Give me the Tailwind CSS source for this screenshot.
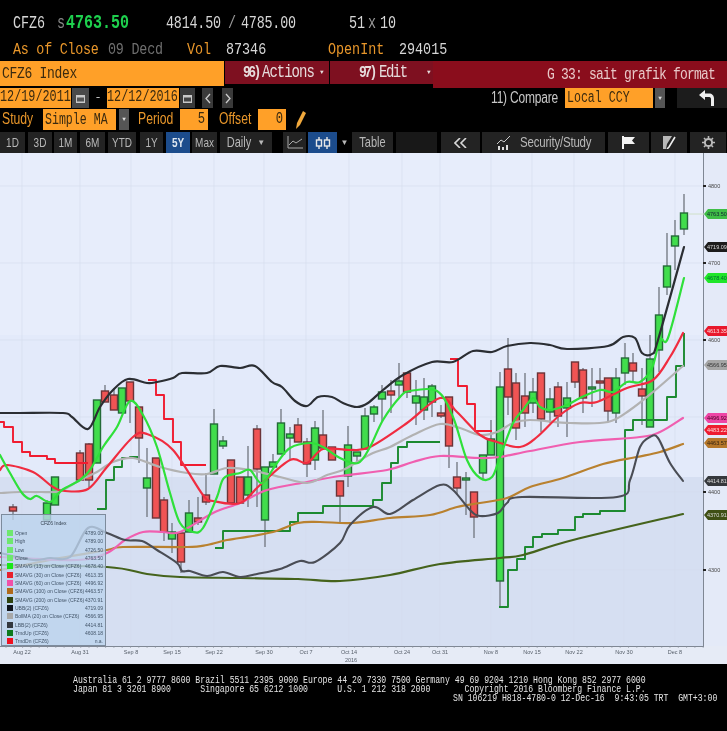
<!DOCTYPE html>
<html lang="en">
<head>
    <meta charset="UTF-8">
    <meta name="viewport" content="width=device-width, initial-scale=1.0">
    <title>CFZ6 Index</title>
    <script src="https://cdn.jsdelivr.net/npm/@tailwindcss/browser@4"></script>
</head>
<body class="bg-black">
<div class="w-[727px] h-[731px] overflow-hidden bg-black font-['Liberation_Mono',monospace] blur-[0.5px] flex flex-col">

    <!-- Quote lines -->
    <div class="h-[41px] shrink-0 pt-[15px] pl-[13px] flex items-start text-[13.4px] leading-[18px] text-[#d6d6d6]">
        <span class="scale-y-[1.35] w-[44px]">CFZ6</span>
        <span class="scale-y-[1.35] w-[9px] text-[#8a8a8a]">s</span>
        <span class="scale-y-[1.35] w-[100px] text-[15px] font-bold text-[#1ed04e]">4763.50</span>
        <span class="scale-y-[1.35] w-[62px] tracking-[-0.2px]">4814.50</span>
        <span class="scale-y-[1.35] w-[13px] text-[#999]">/</span>
        <span class="scale-y-[1.35] w-[108px] tracking-[-0.2px]">4785.00</span>
        <span class="scale-y-[1.35] w-[19px]">51</span>
        <span class="scale-y-[1.35] w-[12px] text-[#999]">x</span>
        <span class="scale-y-[1.35]">10</span>
    </div>
    <div class="h-[20px] shrink-0 pt-[1px] pl-[13px] flex items-start text-[13.4px] leading-[16px] text-[#e8962a]">
        <span class="scale-y-[1.25] w-[95px] tracking-[-0.25px]">As of Close</span>
        <span class="scale-y-[1.25] w-[79px] tracking-[-0.2px] text-[#6f6f6f]">09 Decd</span>
        <span class="scale-y-[1.25] w-[39px]">Vol</span>
        <span class="scale-y-[1.25] w-[102px] text-[#d6d6d6]">87346</span>
        <span class="scale-y-[1.25] w-[71px]">OpenInt</span>
        <span class="scale-y-[1.25] text-[#d6d6d6]">294015</span>
    </div>

    <!-- Command bar -->
    <div class="h-[27px] shrink-0 flex text-[13px]">
        <div class="w-[224px] h-[25px] bg-[#ffa028] text-[#3a2a10] pl-[2px] flex items-center">
            <span class="scale-y-[1.3] tracking-[-0.3px]">CFZ6 Index</span>
        </div>
        <div class="w-[104px] h-[23px] ml-[1px] bg-[#7e1020] text-[#e6dcdc] flex items-center pl-[18px]">
            <span class="scale-y-[1.3] w-[19px] tracking-[-2.5px] font-bold">96)</span>
            <span class="scale-y-[1.3] text-[14px] tracking-[-1px] w-[58px]">Actions</span>
            <span class="text-[6px]">▼</span>
        </div>
        <div class="w-[103px] h-[23px] ml-[1px] bg-[#7e1020] text-[#e6dcdc] flex items-center pl-[29px]">
            <span class="scale-y-[1.3] w-[20px] tracking-[-2.5px] font-bold">97)</span>
            <span class="scale-y-[1.3] text-[14px] tracking-[-1.5px] w-[48px]">Edit</span>
            <span class="text-[6px]">▼</span>
        </div>
        <div class="w-[294px] bg-[#8a0d1c] text-[#e8c8c8] flex items-center justify-end pr-[12px]">
            <span class="scale-y-[1.3] tracking-[-0.8px]">G 33: sait grafik format</span>
        </div>
    </div>

    <!-- Date range and compare -->
    <div class="h-[21px] shrink-0 flex items-start text-[11.8px] text-[#3a2a10]">
        <div class="w-[71px] h-[20px] bg-[#ffa028] flex items-center"><span class="scale-y-[1.35]">12/19/2011</span></div>
        <div class="w-[17px] h-[20px] ml-[1px] bg-[#4a4a4a] flex items-center justify-center">
            <svg width="9" height="9" viewBox="0 0 9 9"><path d="M0 1h9v8H0z" fill="#c8c8c8"/><path d="M1 3.500h7v4H1z" fill="#555"/></svg>
        </div>
        <div class="w-[18px] h-[20px] text-[#d8d8d8] flex items-center justify-center">-</div>
        <div class="w-[72px] h-[20px] bg-[#ffa028] flex items-center"><span class="scale-y-[1.35]">12/12/2016</span></div>
        <div class="w-[15px] h-[20px] ml-[1px] bg-[#3a3a3a] flex items-center justify-center">
            <svg width="9" height="9" viewBox="0 0 9 9"><path d="M0 1h9v8H0z" fill="#c8c8c8"/><path d="M1 3.500h7v4H1z" fill="#444"/></svg>
        </div>
        <div class="w-[11px] h-[20px] ml-[7px] bg-[#3a3a3a] flex items-center justify-center">
            <svg width="6" height="11" viewBox="0 0 6 11"><path d="M5 1 1 5.500 5 10" fill="none" stroke="#ccc" stroke-width="1.3"/></svg>
        </div>
        <div class="w-[11px] h-[20px] ml-[9px] bg-[#3a3a3a] flex items-center justify-center">
            <svg width="6" height="11" viewBox="0 0 6 11"><path d="M1 1l4 4.500L1 10" fill="none" stroke="#ccc" stroke-width="1.3"/></svg>
        </div>
        <div class="w-[325px] h-[20px] text-[#c8c8c8] flex items-center justify-end font-['Liberation_Sans',sans-serif] text-[12px] tracking-[-0.2px]"><span class="scale-y-[1.3]">11) Compare</span></div>
        <div class="w-[88px] h-[20px] ml-[7px] bg-[#ffa028] pl-[2px] flex items-center text-[11.6px]"><span class="scale-y-[1.35]">Local CCY</span></div>
        <div class="w-[10px] h-[20px] ml-[2px] bg-[#555] text-[#ddd] text-[6px] flex items-center justify-center">▼</div>
        <div class="w-[50px] h-[20px] ml-[12px] bg-[#1c1c1c] flex items-center justify-end pr-[13px]">
            <svg width="15" height="16" viewBox="0 0 15 16"><path d="M12 16V9C12 7.500 11 7 9.500 7H6V10L0 5 6 0V3.500H10C13 3.500 15 5.500 15 8.500V16Z" fill="#f0f0f0"/></svg>
        </div>
    </div>

    <!-- Study line -->
    <div class="h-[23px] shrink-0 flex items-start text-[12.2px] text-[#3a2a10]">
        <div class="w-[43px] h-[21px] pl-[2px] text-[#e8962a] font-['Liberation_Sans',sans-serif] flex items-center"><span class="scale-y-[1.35]">Study</span></div>
        <div class="w-[73px] h-[21px] bg-[#ffa028] pl-[2px] flex items-center text-[11.6px]"><span class="scale-y-[1.35]">Simple MA</span></div>
        <div class="w-[10px] h-[21px] ml-[3px] bg-[#555] text-[#ddd] text-[6px] flex items-center justify-center">▼</div>
        <div class="w-[51px] h-[21px] pl-[9px] text-[#e8962a] font-['Liberation_Sans',sans-serif] flex items-center"><span class="scale-y-[1.35]">Period</span></div>
        <div class="w-[28px] h-[21px] bg-[#ffa028] pr-[3px] flex items-center justify-end"><span class="scale-y-[1.35]">5</span></div>
        <div class="w-[50px] h-[21px] pl-[11px] text-[#e8962a] font-['Liberation_Sans',sans-serif] flex items-center"><span class="scale-y-[1.35]">Offset</span></div>
        <div class="w-[28px] h-[21px] bg-[#ffa028] pr-[3px] flex items-center justify-end"><span class="scale-y-[1.35]">0</span></div>
        <div class="h-[21px] ml-[10px] flex items-center">
            <svg width="10" height="18" viewBox="0 0 10 18"><path d="M7 0l3 2-6 12-4 4 1-6z" fill="#f0a83c"/></svg>
        </div>
    </div>

    <!-- Chart toolbar -->
    <div class="h-[21px] shrink-0 flex text-[10px] text-[#b8b8b8] font-['Liberation_Sans',sans-serif]">
        <div class="w-[25px] bg-[#232323] flex items-center justify-center"><span class="scale-y-[1.3]">1D</span></div>
        <div class="w-[24px] ml-[3px] bg-[#232323] flex items-center justify-center"><span class="scale-y-[1.3]">3D</span></div>
        <div class="w-[23px] ml-[2px] bg-[#232323] flex items-center justify-center"><span class="scale-y-[1.3]">1M</span></div>
        <div class="w-[25px] ml-[3px] bg-[#232323] flex items-center justify-center"><span class="scale-y-[1.3]">6M</span></div>
        <div class="w-[28px] ml-[3px] bg-[#232323] flex items-center justify-center"><span class="scale-y-[1.3]">YTD</span></div>
        <div class="w-[23px] ml-[4px] bg-[#232323] flex items-center justify-center"><span class="scale-y-[1.3]">1Y</span></div>
        <div class="w-[24px] ml-[3px] bg-[#1c4c8c] text-[#e0e8f0] font-bold flex items-center justify-center"><span class="scale-y-[1.3]">5Y</span></div>
        <div class="w-[25px] ml-[2px] bg-[#232323] flex items-center justify-center"><span class="scale-y-[1.3]">Max</span></div>
        <div class="w-[52px] ml-[3px] bg-[#232323] flex items-center justify-center gap-[6px] text-[11px]"><span class="scale-y-[1.3]">Daily</span><span class="text-[8px]">▼</span></div>
        <div class="w-[23px] ml-[11px] bg-[#232323] flex items-center justify-center">
            <svg width="16" height="13" viewBox="0 0 16 13"><path d="M1 0v12h15" fill="none" stroke="#aaa"/><path d="M2 9l4-4 3 2 6-4" fill="none" stroke="#aaa"/></svg>
        </div>
        <div class="w-[29px] ml-[2px] bg-[#1c4c8c] flex items-center justify-center">
            <svg width="16" height="12" viewBox="0 0 16 12" fill="none" stroke="#e8e8e8" stroke-width="1.4"><path d="M4 0v12M12 0v12"/><rect x="1.500" y="3" width="5" height="6" fill="#1c4c8c"/><rect x="9.500" y="3" width="5" height="6" fill="#1c4c8c"/></svg>
        </div>
        <div class="w-[15px] text-[8px] flex items-center justify-center">▼</div>
        <div class="w-[41px] bg-[#232323] flex items-center justify-center text-[11px]"><span class="scale-y-[1.3]">Table</span></div>
        <div class="w-[41px] ml-[3px] bg-[#181818]"></div>
        <div class="w-[39px] ml-[4px] bg-[#232323] flex items-center justify-center">
            <svg width="13" height="10" viewBox="0 0 13 10" fill="none" stroke="#d8d8d8" stroke-width="1.6"><path d="M6 0 1 5l5 5M12 0 7 5l5 5"/></svg>
        </div>
        <div class="w-[123px] ml-[2px] bg-[#232323] flex items-center pl-[14px] gap-[8px] text-[11.5px] tracking-[-0.2px]">
            <svg width="16" height="14" viewBox="0 0 16 14"><path d="M1 8l4-4 3 2 6-6" fill="none" stroke="#ccc"/><path d="M2 10h2v4H2zM6 11h2v3H6zM10 9h2v5h-2z" fill="#ddd"/></svg>
            <span class="scale-y-[1.3]">Security/Study</span>
        </div>
        <div class="w-[41px] ml-[3px] bg-[#232323] flex items-center justify-center">
            <svg width="13" height="13" viewBox="0 0 13 13"><path d="M0 0h2v13H0zM2 1h11L10 4.500 13 8H2z" fill="#f2f2f2"/></svg>
        </div>
        <div class="w-[36px] ml-[2px] bg-[#232323] flex items-center justify-center">
            <svg width="13" height="13" viewBox="0 0 13 13"><path d="M0 0h9L4 8 3 13H0z" fill="#b8b8b8"/><path d="M12 1 6 11l-2 2" fill="none" stroke="#eee" stroke-width="1.600"/></svg>
        </div>
        <div class="w-[36px] ml-[3px] bg-[#232323] flex items-center justify-center">
            <svg width="13" height="13" viewBox="0 0 13 13"><circle cx="6.500" cy="6.500" r="3.600" fill="none" stroke="#bbb" stroke-width="2"/><path d="M6.500 0v2.500M6.500 10.500V13M0 6.500h2.500M10.500 6.500H13M2 2l1.700 1.700M9.300 9.300 11 11M11 2 9.300 3.700M3.700 9.300 2 11" stroke="#bbb" stroke-width="1.600"/></svg>
        </div>
    </div>

    <!-- Chart -->
    <div class="relative h-[511px] shrink-0 bg-[#e6ecfa]">
        <svg id="chart" width="727" height="511" viewBox="0 153 727 511" class="block font-['Liberation_Sans',sans-serif]"></svg>

        <!-- Legend -->
        <div class="absolute left-[1px] top-[361px] w-[105px] h-[132px] bg-[#bcd3ec]/80 border border-[#7d8b9c] text-[5px] leading-[8.33px] text-[#44566a] font-['Liberation_Sans',sans-serif]">
            <div class="h-[14px] pt-[4px] text-center text-[#33414f]">CFZ6 Index</div>
            <div class="flex flex-col">
                <div class="h-[8.33px] flex items-center pl-[5px] pr-[2px]"><span class="w-[6px] h-[6px] mr-[2px] bg-[#6fe86f]"></span><span class="flex-1">Open</span><span>4789.00</span></div>
                <div class="h-[8.33px] flex items-center pl-[5px] pr-[2px]"><span class="w-[6px] h-[6px] mr-[2px] bg-[#6fe86f]"></span><span class="flex-1">High</span><span>4789.00</span></div>
                <div class="h-[8.33px] flex items-center pl-[5px] pr-[2px]"><span class="w-[6px] h-[6px] mr-[2px] bg-[#6fe86f]"></span><span class="flex-1">Low</span><span>4726.50</span></div>
                <div class="h-[8.33px] flex items-center pl-[5px] pr-[2px]"><span class="w-[6px] h-[6px] mr-[2px] bg-[#6fe86f]"></span><span class="flex-1">Close</span><span>4763.50</span></div>
                <div class="h-[8.33px] flex items-center pl-[5px] pr-[2px]"><span class="w-[6px] h-[6px] mr-[2px] bg-[#18e818]"></span><span class="flex-1">SMAVG (13) on Close (CFZ6)</span><span>4678.40</span></div>
                <div class="h-[8.33px] flex items-center pl-[5px] pr-[2px]"><span class="w-[6px] h-[6px] mr-[2px] bg-[#e8202c]"></span><span class="flex-1">SMAVG (30) on Close (CFZ6)</span><span>4613.35</span></div>
                <div class="h-[8.33px] flex items-center pl-[5px] pr-[2px]"><span class="w-[6px] h-[6px] mr-[2px] bg-[#f050a8]"></span><span class="flex-1">SMAVG (60) on Close (CFZ6)</span><span>4496.92</span></div>
                <div class="h-[8.33px] flex items-center pl-[5px] pr-[2px]"><span class="w-[6px] h-[6px] mr-[2px] bg-[#b06a1c]"></span><span class="flex-1">SMAVG (100) on Close (CFZ6)</span><span>4463.57</span></div>
                <div class="h-[8.33px] flex items-center pl-[5px] pr-[2px]"><span class="w-[6px] h-[6px] mr-[2px] bg-[#2f4410]"></span><span class="flex-1">SMAVG (200) on Close (CFZ6)</span><span>4370.91</span></div>
                <div class="h-[8.33px] flex items-center pl-[5px] pr-[2px]"><span class="w-[6px] h-[6px] mr-[2px] bg-[#10141c]"></span><span class="flex-1">UBB(2) (CFZ6)</span><span>4719.09</span></div>
                <div class="h-[8.33px] flex items-center pl-[5px] pr-[2px]"><span class="w-[6px] h-[6px] mr-[2px] bg-[#a8a8a8]"></span><span class="flex-1">BollMA (20) on Close (CFZ6)</span><span>4566.95</span></div>
                <div class="h-[8.33px] flex items-center pl-[5px] pr-[2px]"><span class="w-[6px] h-[6px] mr-[2px] bg-[#33383f]"></span><span class="flex-1">LBB(2) (CFZ6)</span><span>4414.81</span></div>
                <div class="h-[8.33px] flex items-center pl-[5px] pr-[2px]"><span class="w-[6px] h-[6px] mr-[2px] bg-[#0d7a1e]"></span><span class="flex-1">TrndUp (CFZ6)</span><span>4608.18</span></div>
                <div class="h-[8.33px] flex items-center pl-[5px] pr-[2px]"><span class="w-[6px] h-[6px] mr-[2px] bg-[#f01020]"></span><span class="flex-1">TrndDn (CFZ6)</span><span>n.a.</span></div>
            </div>
        </div>
    </div>

    <!-- Footer -->
    <div class="shrink-0 pt-[12px] pl-[73px] text-[8.17px] leading-[7px] text-[#e4e4e4]">
        <div class="mb-[2px] scale-y-[1.25] whitespace-pre">Australia 61 2 9777 8600 Brazil 5511 2395 9000 Europe 44 20 7330 7500 Germany 49 69 9204 1210 Hong Kong 852 2977 6000</div>
        <div class="mb-[2px] scale-y-[1.25] whitespace-pre">Japan 81 3 3201 8900      Singapore 65 6212 1000      U.S. 1 212 318 2000       Copyright 2016 Bloomberg Finance L.P.</div>
        <div class="scale-y-[1.25] whitespace-pre pl-[380px]">SN 106219 H818-4780-0 12-Dec-16  9:43:05 TRT  GMT+3:00</div>
    </div>
</div>

<script>
    let svg = document.getElementById("chart");
    let out = "";

    // background bands, same coordinates as the screenshot
    out += '<rect x="0" y="153" width="704" height="324" fill="#e7edfb"/>';
    out += '<rect x="0" y="335" width="704" height="142" fill="#e3eafa"/>';
    out += '<rect x="0" y="477" width="704" height="169" fill="#d6dff2"/>';
    out += '<rect x="0" y="646" width="727" height="18" fill="#e6ebf6"/>';
    out += '<rect x="704" y="153" width="23" height="493" fill="#e4eaf8"/>';

    // faint grid
    [22,80,131,172,214,264,306,349,402,440,491,532,574,624,675].forEach(x => {
        out += `<line x1="${x}" y1="153" x2="${x}" y2="646" stroke="#d3dbec" stroke-width="0.6"/>`;
    });
    [186,263,340,417,492,570].forEach(y => {
        out += `<line x1="0" y1="${y}" x2="704" y2="${y}" stroke="#d3dbec" stroke-width="0.6"/>`;
    });

    // x, wick top, wick bottom, body top, body bottom, g or r
    let candles = [
        [13,504,520,507,511,"r"],[47,500,525,503,520,"g"],[55,477,505,477,505,"g"],
        [80,450,480,453,480,"r"],[89,443,487,444,480,"r"],[97,400,463,400,463,"g"],
        [105,385,402,391,402,"r"],[114,388,410,395,410,"r"],[122,388,413,388,413,"g"],
        [130,382,423,382,401,"r"],[139,407,463,407,438,"r"],[147,448,517,478,488,"g"],
        [156,458,518,458,518,"r"],[164,497,541,500,532,"r"],[172,523,553,532,539,"g"],
        [181,533,573,533,562,"r"],[189,500,532,513,532,"g"],[198,497,525,518,522,"r"],
        [206,473,505,495,502,"r"],[214,409,474,424,474,"g"],[223,436,449,441,446,"g"],
        [231,460,503,460,503,"r"],[240,477,503,477,503,"r"],[248,446,507,477,495,"g"],
        [257,425,507,429,469,"r"],[265,467,547,467,520,"g"],[273,454,467,462,467,"g"],
        [281,409,454,423,454,"g"],[290,427,460,434,438,"g"],[298,418,442,425,442,"r"],
        [307,438,477,442,464,"r"],[315,421,470,428,460,"g"],[323,410,448,435,448,"r"],
        [332,447,460,447,460,"r"],[340,481,522,481,496,"r"],[348,426,487,445,476,"g"],
        [357,452,463,452,456,"g"],[365,408,449,416,449,"g"],[374,405,422,407,414,"g"],
        [382,385,422,392,399,"g"],[391,380,413,391,395,"r"],[399,363,398,381,385,"g"],
        [407,373,398,373,392,"r"],[416,380,425,396,403,"g"],[424,378,420,397,410,"g"],
        [432,384,417,386,402,"g"],[441,405,418,413,416,"r"],[449,397,468,397,446,"r"],
        [457,462,495,477,488,"r"],[466,472,515,478,480,"g"],[474,492,538,492,517,"r"],
        [483,455,480,455,473,"g"],[491,420,455,439,455,"g"],[500,372,607,387,581,"g"],
        [508,338,415,369,397,"r"],[516,373,440,383,428,"r"],[525,373,427,396,413,"r"],
        [533,378,413,392,403,"g"],[541,373,432,373,419,"r"],[550,388,423,399,412,"g"],
        [558,382,427,387,416,"r"],[567,382,437,398,408,"g"],[575,362,388,362,382,"r"],
        [583,368,413,370,398,"r"],[592,368,407,387,389,"g"],[600,368,400,381,383,"r"],
        [608,378,422,378,411,"r"],[616,368,423,378,413,"g"],[625,343,385,358,373,"g"],
        [633,353,382,363,371,"r"],[642,368,425,389,396,"r"],[650,335,427,359,427,"g"],
        [659,287,372,315,350,"g"],[667,233,295,266,287,"g"],[675,220,270,236,246,"g"],
        [684,194,235,213,229,"g"]
    ];
    candles.forEach(c => {
        out += `<line x1="${c[0]}" y1="${c[1]}" x2="${c[0]}" y2="${c[2]}" stroke="#777d86" stroke-width="1.4"/>`;
    });
    candles.forEach(c => {
        let fill = c[5] == "g" ? "#41dd4c" : "#f05454";
        let edge = c[5] == "g" ? "#246b38" : "#6b3438";
        out += `<rect x="${c[0]-3.5}" y="${c[3]}" width="7" height="${c[4]-c[3]}" fill="${fill}" stroke="${edge}" stroke-width="1.4"/>`;
    });

    function steps(points, color) {
        out += `<polyline points="${points}" fill="none" stroke="${color}" stroke-width="1.9" stroke-linejoin="round"/>`;
    }

    // moving averages are smooth curves, so run a spline through the read-off points
    function curve(points, color, width) {
        let p = points.split(" ").map(s => s.split(",").map(Number));
        let d = `M${p[0][0]} ${p[0][1]}`;
        for (let i = 0; i < p.length - 1; i++) {
            let a = p[Math.max(i - 1, 0)], b = p[i], c = p[i + 1], e = p[Math.min(i + 2, p.length - 1)];
            d += ` C${b[0] + (c[0] - a[0]) / 6} ${b[1] + (c[1] - a[1]) / 6} ${c[0] - (e[0] - b[0]) / 6} ${c[1] - (e[1] - b[1]) / 6} ${c[0]} ${c[1]}`;
        }
        out += `<path d="${d}" fill="none" stroke="${color}" stroke-width="${width}" stroke-linecap="round"/>`;
    }

    // trend steps
    steps("97,509 106,509 106,480 114,480 114,467 122,467 122,458 130,458 130,457 138,457", "#1c8a30");
    steps("215,548 223,548 223,531 290,531 290,522 298,522 298,513 323,513 323,506 373,506 373,500 382,500 382,483 391,483 391,463 398,463 398,447 407,447 407,442 440,442", "#1c8a30");
    steps("499,607 508,607 508,570 517,570 517,559 525,559 525,547 533,547 533,537 542,537 542,534 558,534 558,530 575,530 575,517 583,517 583,514 600,514 600,511 625,511 625,430 633,430 633,420 667,420 667,397 676,397 676,366 684,366 684,333", "#1c8a30");
    steps("0,422 4,422 4,427 13,427 13,442 22,442 22,452 30,452 30,456 47,456 47,459 55,459 55,463 88,463", "#f01c30");
    steps("148,380 156,380 156,395 164,395 164,419 173,419 173,442 181,442 181,465 206,465", "#f01c30");
    steps("450,359 458,359 458,386 467,386 467,404 475,404 475,431 492,431", "#f01c30");

    // moving averages and bands
    curve("0,565 107,567 147,574 180,577 240,578 298,579 340,581 390,575 440,564 500,558 523,555 573,540 683,514", "#45631c", 2.2);
    curve("0,570 50,560 107,550 123,547 187,547 207,545 227,540 240,538 273,532 298,523 320,522 353,523 390,518 430,515 457,507 480,503 507,498 530,487 563,478 603,464 637,457 660,452 683,444", "#b9812f", 2.2);
    curve("0,557 77,560 107,553 125,540 143,532 163,532 180,532 213,513 240,503 267,490 307,482 340,476 387,470 413,462 440,456 480,458 500,457 530,451 580,442 640,437 660,432 683,418", "#f05fb0", 2.2);
    curve("0,553 33,560 50,558 70,557 88,528 107,533 125,540 142,541 157,550 177,563 182,571 190,571 207,576 223,572 240,577 257,574 280,569 300,561 315,562 340,543 350,525 373,507 390,514 413,500 440,485 453,490 470,510 480,516 498,513 507,503 522,497 617,497 630,480 640,447 650,437 658,438 670,463 683,481", "#4a4d55", 2.1);
    curve("0,493 20,492 40,492 60,491 80,480 97,472 113,462 133,458 160,467 187,473 207,474 227,468 250,470 280,477 307,483 327,475 343,470 357,462 373,453 390,447 413,435 440,424 460,428 480,435 497,432 513,423 530,420 570,423 608,422 630,410 653,392 683,366", "#b2b2b2", 2.2);
    curve("0,470 7,465 33,472 53,487 65,491 88,489 107,467 133,437 147,434 173,450 203,495 213,501 240,503 260,485 290,460 307,463 323,449 350,450 370,447 407,423 440,398 457,412 480,435 497,442 520,447 537,437 560,415 580,403 597,402 627,388 653,380 670,357 683,333", "#f02c40", 2.2);
    curve("0,455 10,473 22,493 30,499 37,496 50,502 62,490 80,480 90,470 103,447 117,427 130,401 143,415 157,447 170,493 180,523 193,532 203,528 217,497 224,478 240,473 250,470 262,483 277,463 290,448 310,443 323,447 340,458 358,463 370,447 383,420 400,397 410,391 437,391 453,417 467,460 480,478 492,477 500,457 513,423 523,410 533,398 540,407 550,410 567,405 580,398 600,390 613,392 627,382 640,382 652,368 660,340 668,338 684,278", "#2fe03a", 2.2);
    curve("0,413 20,413 63,413 72,417 88,429 100,407 113,390 128,379 147,383 157,382 173,378 182,373 207,373 220,366 240,368 255,366 272,382 282,387 295,401 307,406 318,397 332,397 343,403 357,407 368,403 383,390 403,375 432,362 453,362 473,351 492,352 507,346 530,343 550,345 567,349 608,346 623,337 635,338 642,353 652,354 658,340 684,247", "#2b2e33", 2.2);

    // right axis
    out += '<line x1="703.500" y1="153" x2="703.500" y2="646" stroke="#7f8794"/>';
    out += '<line x1="0" y1="646.500" x2="704" y2="646.500" stroke="#7f8794"/>';
    [[186,"4800"],[263,"4700"],[340,"4600"],[492,"4400"],[570,"4300"]].forEach(t => {
        out += `<rect x="703" y="${t[0]-1}" width="3" height="2" fill="#222"/>`;
        out += `<text x="708" y="${t[0]+2}" font-size="5.500" fill="#444">${t[1]}</text>`;
    });
    [[214,"4763.50","#3fbe46","#123"],[247,"4719.09","#1c1c1c","#ddd"],[278,"4678.40","#20e62a","#063"],
     [331,"4613.35","#e8182c","#fdd"],[365,"4566.95","#a6a6a6","#333"],[418,"4496.92","#ee45a5","#402"],
     [430,"4483.22","#ee1c30","#fdd"],[443,"4463.57","#b5772a","#321"],[481,"4414.81","#35383c","#ddd"],
     [515,"4370.91","#3f4f14","#ddd"]].forEach(p => {
        out += `<polygon points="704,${p[0]} 708,${p[0]-5} 727,${p[0]-5} 727,${p[0]+5} 708,${p[0]+5}" fill="${p[2]}"/>`;
        out += `<text x="707" y="${p[0]+2}" font-size="5.500" fill="${p[3]}">${p[1]}</text>`;
    });
    out += '<line x1="688" y1="214" x2="704" y2="214" stroke="#cfe0c8"/>';

    // time axis
    for (let x = 6; x < 704; x += 8.3) {
        out += `<line x1="${x}" y1="646" x2="${x}" y2="648" stroke="#8a919c" stroke-width="0.6"/>`;
    }
    [[22,"Aug 22"],[80,"Aug 31"],[131,"Sep 8"],[172,"Sep 15"],[214,"Sep 22"],[264,"Sep 30"],[306,"Oct 7"],[349,"Oct 14"],
     [402,"Oct 24"],[440,"Oct 31"],[491,"Nov 8"],[532,"Nov 15"],[574,"Nov 22"],[624,"Nov 30"],[675,"Dec 8"]].forEach(t => {
        out += `<text x="${t[0]}" y="654" text-anchor="middle" font-size="5.500" fill="#555d68">${t[1]}</text>`;
    });
    out += '<text x="351" y="662" text-anchor="middle" font-size="5.500" fill="#555d68">2016</text>';

    svg.innerHTML = out;
</script>
</body>
</html>
